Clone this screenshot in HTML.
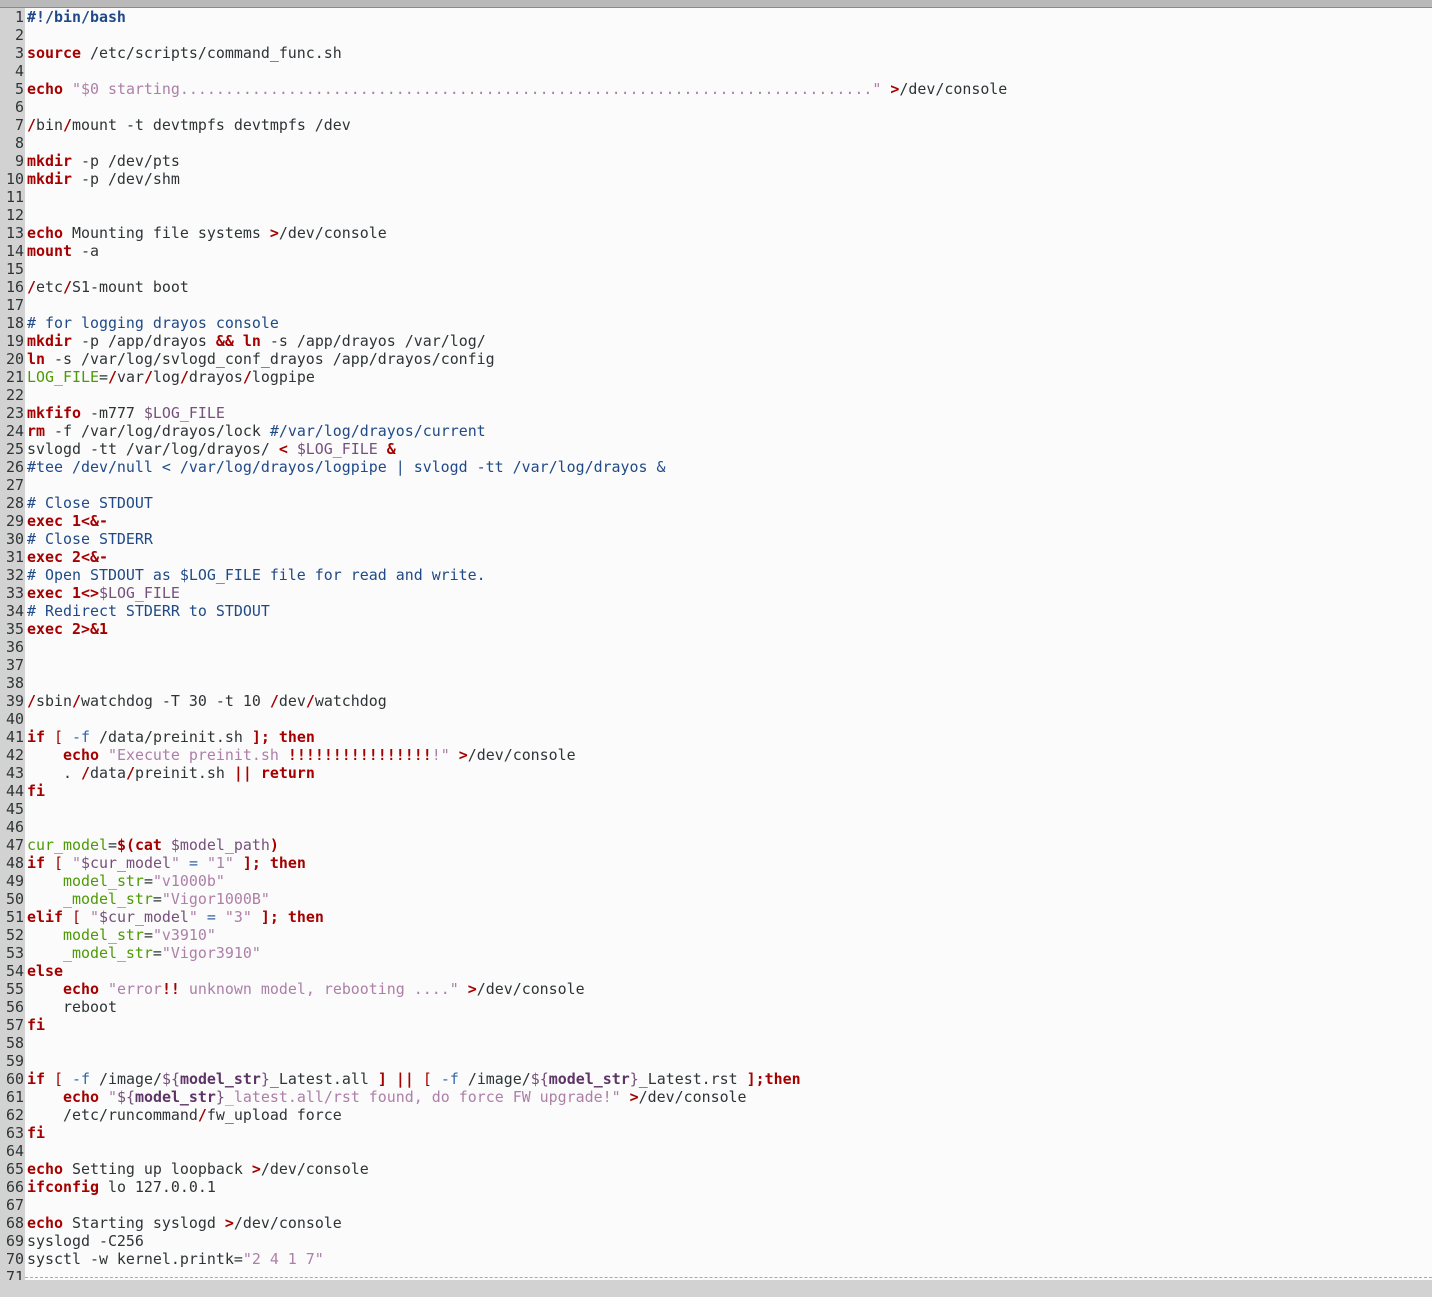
<!DOCTYPE html>
<html><head><meta charset="utf-8"><style>
html,body{margin:0;padding:0;width:1432px;height:1297px;overflow:hidden;background:#fbfbfb}
#top{position:absolute;left:0;top:0;width:1432px;height:7px;background:#b9b9b9;border-bottom:1px solid #8a8a8a}
#gut{position:absolute;left:0;top:8px;width:25px;height:1272px;background:#d2d2d2}
pre{margin:0;position:absolute;top:8px;font-family:"DejaVu Sans Mono","Liberation Mono",monospace;font-size:14.95px;line-height:18px;color:#2e3436}
#nums{left:0;width:24px;text-align:right;color:#2e3436}
#code{left:27px}
.k{color:#a40000;font-weight:bold}
.r{color:#a40000}
.c{color:#204a87}
.b{color:#204a87;font-weight:bold}
.s{color:#ad7fa8}
.v{color:#75507b}
.vb{color:#5c3566;font-weight:bold}
.g{color:#4e9a06}
.o{color:#3465a4}
#dash{position:absolute;left:25px;top:1277px;width:1407px;border-top:1px dashed #aaa}
#bot{position:absolute;left:0;top:1280px;width:1432px;height:17px;background:#d2d2d2}
</style></head><body>
<div id="top"></div>
<div id="gut"></div>
<pre id="nums">1
2
3
4
5
6
7
8
9
10
11
12
13
14
15
16
17
18
19
20
21
22
23
24
25
26
27
28
29
30
31
32
33
34
35
36
37
38
39
40
41
42
43
44
45
46
47
48
49
50
51
52
53
54
55
56
57
58
59
60
61
62
63
64
65
66
67
68
69
70
71</pre>
<pre id="code"><span class="b">#!/bin/bash</span>

<span class="k">source</span> /etc/scripts/command_func.sh

<span class="k">echo</span> <span class="s">"$0 starting............................................................................."</span> <span class="k">&gt;</span>/dev/console

<span class="k">/</span>bin<span class="k">/</span>mount -t devtmpfs devtmpfs /dev

<span class="k">mkdir</span> -p /dev/pts
<span class="k">mkdir</span> -p /dev/shm


<span class="k">echo</span> Mounting file systems <span class="k">&gt;</span>/dev/console
<span class="k">mount</span> -a

<span class="k">/</span>etc<span class="k">/</span>S1-mount boot

<span class="c"># for logging drayos console</span>
<span class="k">mkdir</span> -p /app/drayos <span class="k">&amp;&amp;</span> <span class="k">ln</span> -s /app/drayos /var/log/
<span class="k">ln</span> -s /var/log/svlogd_conf_drayos /app/drayos/config
<span class="g">LOG_FILE</span>=<span class="k">/</span>var<span class="k">/</span>log<span class="k">/</span>drayos<span class="k">/</span>logpipe

<span class="k">mkfifo</span> -m777 <span class="v">$LOG_FILE</span>
<span class="k">rm</span> -f /var/log/drayos/lock <span class="c">#/var/log/drayos/current</span>
svlogd -tt /var/log/drayos/ <span class="k">&lt;</span> <span class="v">$LOG_FILE</span> <span class="k">&amp;</span>
<span class="c">#tee /dev/null &lt; /var/log/drayos/logpipe | svlogd -tt /var/log/drayos &amp;</span>

<span class="c"># Close STDOUT</span>
<span class="k">exec 1&lt;&amp;-</span>
<span class="c"># Close STDERR</span>
<span class="k">exec 2&lt;&amp;-</span>
<span class="c"># Open STDOUT as $LOG_FILE file for read and write.</span>
<span class="k">exec 1&lt;&gt;</span><span class="v">$LOG_FILE</span>
<span class="c"># Redirect STDERR to STDOUT</span>
<span class="k">exec 2&gt;&amp;1</span>



<span class="k">/</span>sbin<span class="k">/</span>watchdog -T 30 -t 10 <span class="k">/</span>dev<span class="k">/</span>watchdog

<span class="k">if</span> <span class="r">[</span> <span class="o">-f</span> /data/preinit.sh <span class="k">];</span> <span class="k">then</span>
    <span class="k">echo</span> <span class="s">"Execute preinit.sh </span><span class="k">!!!!!!!!!!!!!!!!</span><span class="s">!"</span> <span class="k">&gt;</span>/dev/console
    . <span class="k">/</span>data<span class="k">/</span>preinit.sh <span class="k">||</span> <span class="k">return</span>
<span class="k">fi</span>


<span class="g">cur_model</span>=<span class="k">$(cat</span> <span class="v">$model_path</span><span class="k">)</span>
<span class="k">if</span> <span class="r">[</span> <span class="s">"</span><span class="v">$cur_model</span><span class="s">"</span> <span class="o">=</span> <span class="s">"1"</span> <span class="k">];</span> <span class="k">then</span>
    <span class="g">model_str</span>=<span class="s">"v1000b"</span>
    <span class="g">_model_str</span>=<span class="s">"Vigor1000B"</span>
<span class="k">elif</span> <span class="r">[</span> <span class="s">"</span><span class="v">$cur_model</span><span class="s">"</span> <span class="o">=</span> <span class="s">"3"</span> <span class="k">];</span> <span class="k">then</span>
    <span class="g">model_str</span>=<span class="s">"v3910"</span>
    <span class="g">_model_str</span>=<span class="s">"Vigor3910"</span>
<span class="k">else</span>
    <span class="k">echo</span> <span class="s">"error</span><span class="k">!!</span><span class="s"> unknown model, rebooting ...."</span> <span class="k">&gt;</span>/dev/console
    reboot
<span class="k">fi</span>


<span class="k">if</span> <span class="r">[</span> <span class="o">-f</span> /image/<span class="v">${</span><span class="vb">model_str</span><span class="v">}</span>_Latest.all <span class="k">]</span> <span class="k">||</span> <span class="r">[</span> <span class="o">-f</span> /image/<span class="v">${</span><span class="vb">model_str</span><span class="v">}</span>_Latest.rst <span class="k">];then</span>
    <span class="k">echo</span> <span class="s">"</span><span class="v">${</span><span class="vb">model_str</span><span class="v">}</span><span class="s">_latest.all/rst found, do force FW upgrade!"</span> <span class="k">&gt;</span>/dev/console
    /etc/runcommand<span class="k">/</span>fw_upload force
<span class="k">fi</span>

<span class="k">echo</span> Setting up loopback <span class="k">&gt;</span>/dev/console
<span class="k">ifconfig</span> lo 127.0.0.1

<span class="k">echo</span> Starting syslogd <span class="k">&gt;</span>/dev/console
syslogd -C256
sysctl -w kernel.printk=<span class="s">"2 4 1 7"</span>
</pre>
<div id="dash"></div>
<div id="bot"></div>
</body></html>
